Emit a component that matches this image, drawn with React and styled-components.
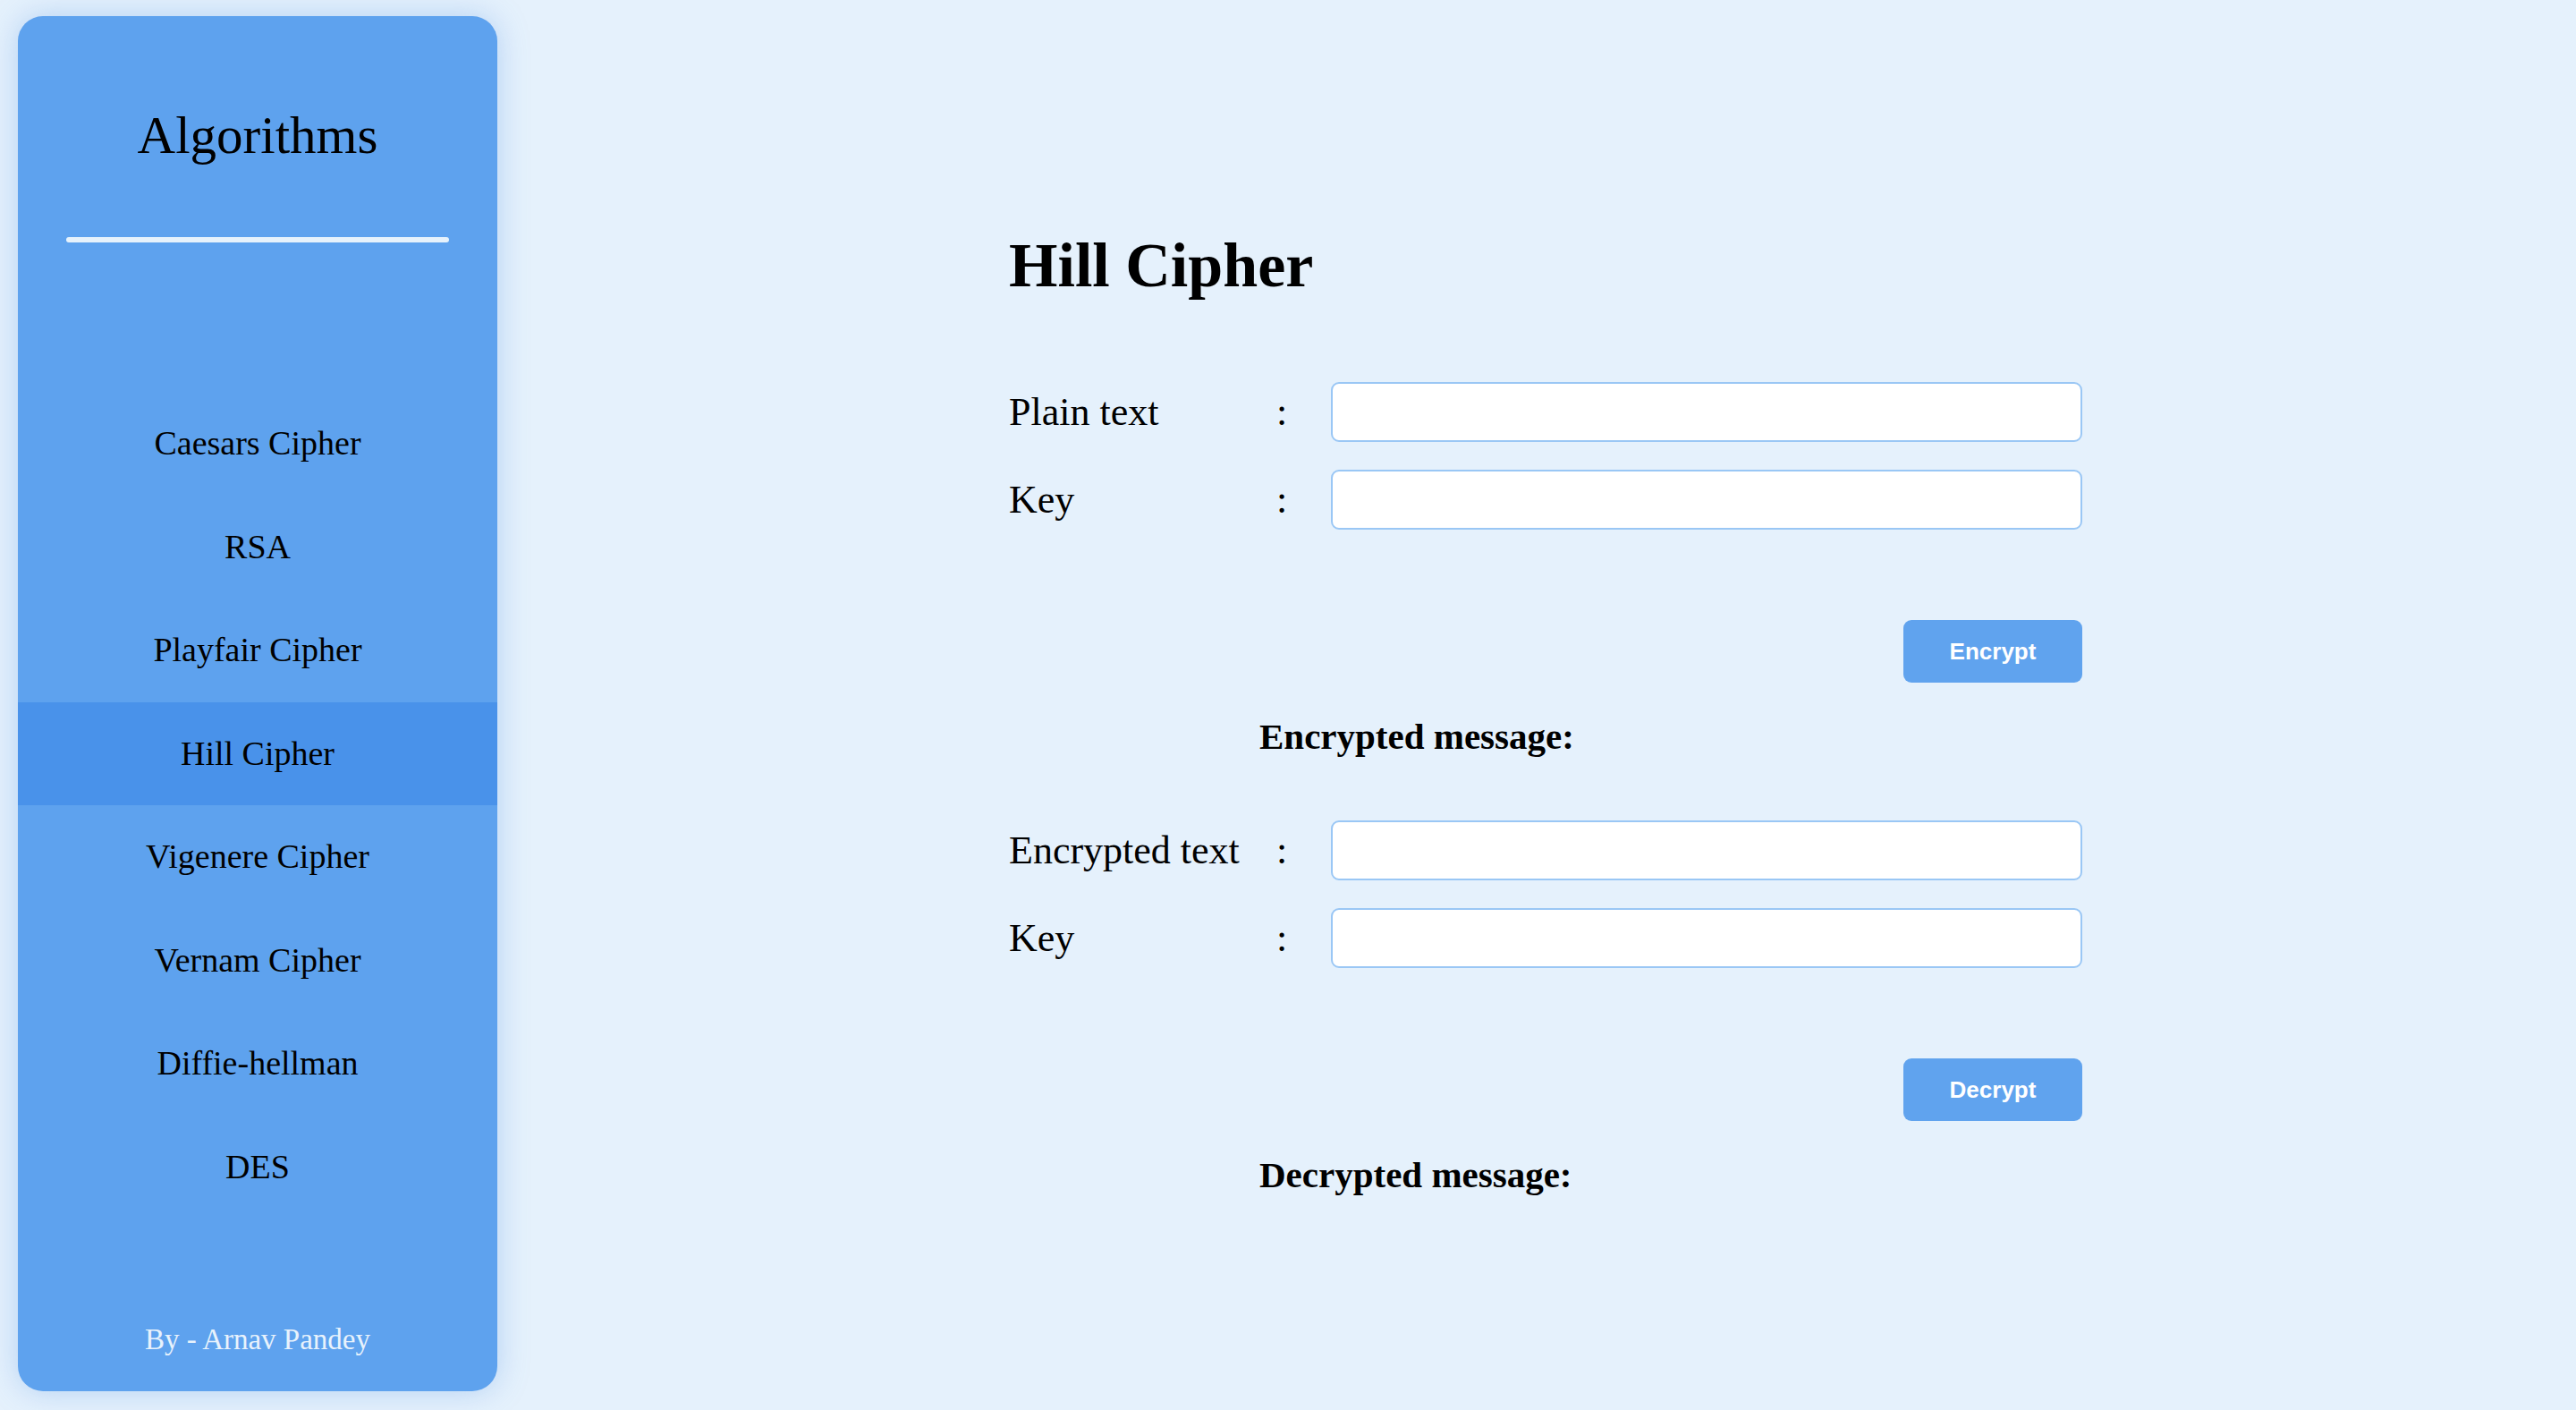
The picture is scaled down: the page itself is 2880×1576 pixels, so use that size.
import React, { useState } from 'react';
import styled, { createGlobalStyle } from 'styled-components';

const GlobalStyle = createGlobalStyle`
  html, body {
    margin: 0;
    padding: 0;
    background-color: #e5f1fc;
  }
  * {
    box-sizing: border-box;
  }
`;

const Page = styled.div`
  display: flex;
  height: 100vh;
  padding: 18px 20px 21px;
  font-family: 'Liberation Serif', 'Times New Roman', serif;
  color: #000;
`;

const Sidebar = styled.aside`
  width: 536px;
  flex-shrink: 0;
  display: flex;
  flex-direction: column;
  align-items: stretch;
  padding-top: 98px;
  padding-bottom: 38px;
  background-color: #5ea2ee;
  border-radius: 28px;
  box-shadow: 0 0 34px rgba(86, 150, 230, 0.35);
  overflow: hidden;
`;

const SideTitle = styled.h1`
  margin: 0;
  font-size: 59px;
  line-height: 70px;
  font-weight: 400;
  text-align: center;
`;

const Divider = styled.div`
  width: 428px;
  height: 6px;
  margin: 79px auto 0;
  border-radius: 3px;
  background-color: #e6f2fc;
`;

const Nav = styled.nav`
  display: flex;
  flex-direction: column;
  margin-top: 167px;
`;

const NavItem = styled.div`
  height: 115.5px;
  line-height: 115.5px;
  font-size: 38px;
  text-align: center;
  cursor: pointer;
  background-color: ${(props) => (props.active ? '#4992ea' : 'transparent')};
`;

const Footer = styled.div`
  margin-top: auto;
  font-size: 33px;
  line-height: 40px;
  text-align: center;
  color: #e8f2fc;
`;

const Main = styled.main`
  flex: 1;
  padding-top: 239px;
  padding-left: 572px;
`;

const Form = styled.div`
  width: 1200px;
  display: flex;
  flex-direction: column;
`;

const Heading = styled.h2`
  margin: 0 0 90px;
  font-size: 70px;
  line-height: 80px;
  font-weight: 700;
`;

const Row = styled.div`
  display: grid;
  grid-template-columns: 299px 61px 1fr;
  align-items: center;
  margin-bottom: ${(props) => (props.last ? '0' : '31px')};
`;

const Label = styled.label`
  font-size: 44px;
  line-height: 62px;
  white-space: nowrap;
`;

const Colon = styled.span`
  font-size: 44px;
  line-height: 62px;
`;

const Input = styled.input`
  width: 840px;
  height: 67px;
  padding: 0 16px;
  border: 2px solid #9ac7f5;
  border-radius: 9px;
  background-color: #fff;
  font-size: 28px;
  font-family: 'Liberation Sans', Arial, sans-serif;
  outline: none;
`;

const ButtonRow = styled.div`
  display: flex;
  justify-content: flex-end;
  margin-top: 101px;
`;

const Button = styled.button`
  width: 200px;
  height: 70px;
  border: none;
  border-radius: 9px;
  background-color: #60a3ee;
  color: #fff;
  font-family: 'Liberation Sans', Arial, sans-serif;
  font-weight: 700;
  font-size: 26px;
  cursor: pointer;
`;

const Result = styled.h3`
  margin: 36px 0 ${(props) => (props.last ? '0' : '69px')};
  padding-left: 280px;
  font-size: 41px;
  line-height: 49px;
  font-weight: 700;
`;

const algorithms = [
  'Caesars Cipher',
  'RSA',
  'Playfair Cipher',
  'Hill Cipher',
  'Vigenere Cipher',
  'Vernam Cipher',
  'Diffie-hellman',
  'DES',
];

const App = () => {
  const [active, setActive] = useState('Hill Cipher');
  const [plain, setPlain] = useState('');
  const [key, setKey] = useState('');
  const [cipher, setCipher] = useState('');
  const [key2, setKey2] = useState('');

  return (
    <>
      <GlobalStyle />
      <Page>
        <Sidebar>
          <SideTitle>Algorithms</SideTitle>
          <Divider />
          <Nav>
            {algorithms.map((name) => (
              <NavItem key={name} active={name === active} onClick={() => setActive(name)}>
                {name}
              </NavItem>
            ))}
          </Nav>
          <Footer>By - Arnav Pandey</Footer>
        </Sidebar>
        <Main>
          <Form>
            <Heading>{active}</Heading>
            <Row>
              <Label>Plain text</Label>
              <Colon>:</Colon>
              <Input value={plain} onChange={(e) => setPlain(e.target.value)} />
            </Row>
            <Row last>
              <Label>Key</Label>
              <Colon>:</Colon>
              <Input value={key} onChange={(e) => setKey(e.target.value)} />
            </Row>
            <ButtonRow>
              <Button>Encrypt</Button>
            </ButtonRow>
            <Result>Encrypted message:</Result>
            <Row>
              <Label>Encrypted text</Label>
              <Colon>:</Colon>
              <Input value={cipher} onChange={(e) => setCipher(e.target.value)} />
            </Row>
            <Row last>
              <Label>Key</Label>
              <Colon>:</Colon>
              <Input value={key2} onChange={(e) => setKey2(e.target.value)} />
            </Row>
            <ButtonRow>
              <Button>Decrypt</Button>
            </ButtonRow>
            <Result last>Decrypted message:</Result>
          </Form>
        </Main>
      </Page>
    </>
  );
};

export default App;
